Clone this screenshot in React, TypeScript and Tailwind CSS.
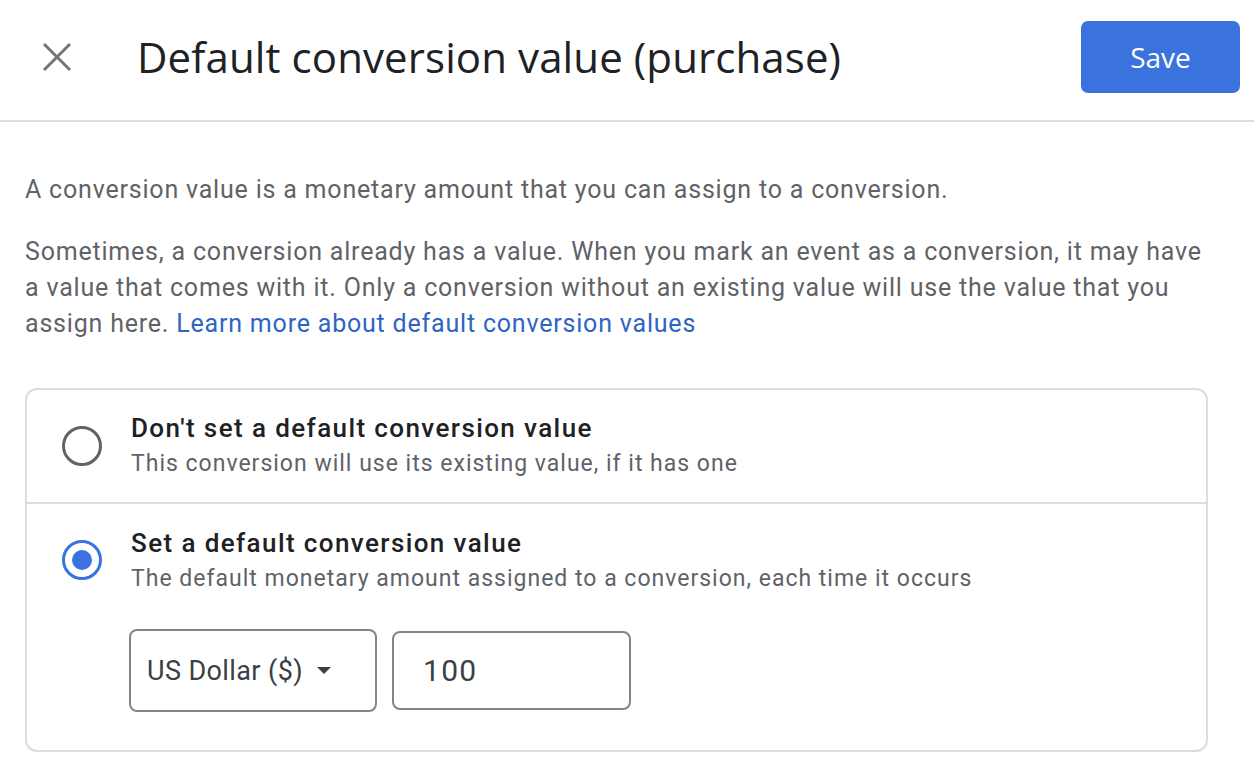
import React, { useState } from "react";

const Radio: React.FC<{ checked: boolean }> = ({ checked }) => (
  <span
    className={`flex h-[40px] w-[40px] shrink-0 items-center justify-center rounded-full border-[3px] ${
      checked ? "border-[#3b73de]" : "border-[#5f6368]"
    }`}
  >
    {checked && <span className="h-[20px] w-[20px] rounded-full bg-[#3b73de]" />}
  </span>
);

const DefaultValueDialog: React.FC = () => {
  const [mode, setMode] = useState<"none" | "set">("set");

  return (
    <div className="min-h-[770px] w-[1254px] bg-white font-['Roboto',sans-serif] text-[#5f6368]">
      <header className="flex h-[122px] items-center border-b-2 border-[#dadce0] pb-[7px] pl-[40px] pr-[14px]">
        <button className="flex h-[34px] w-[34px] items-center justify-center text-[#757575]">
          <svg width="32" height="32" viewBox="0 0 32 32">
            <path d="M3 3 L29 29 M29 3 L3 29" stroke="currentColor" strokeWidth="3" />
          </svg>
        </button>
        <h1 className="ml-[63px] flex-1 font-['Open_Sans',sans-serif] text-[42px] tracking-[0.1px] text-[#202124]">
          Default conversion value (purchase)
        </h1>
        <button className="h-[72px] w-[159px] rounded-[7px] bg-[#3b73de] font-['Open_Sans',sans-serif] text-[28px] font-medium text-white">
          Save
        </button>
      </header>

      <div className="pl-[25px] pt-[50px] text-[25px] leading-[36px] tracking-[0.8px]">
        <div className="w-[1195px]">
          <p>A conversion value is a monetary amount that you can assign to a conversion.</p>
          <p className="mt-[26px]">
            Sometimes, a conversion already has a value. When you mark an event as a conversion, it may have a value
            that comes with it. Only a conversion without an existing value will use the value that you assign here.{" "}
            <a className="text-[#2f64c2]">Learn more about default conversion values</a>
          </p>
        </div>

        <div className="mt-[46px] w-[1183px] rounded-[12px] border-2 border-[#dadce0]">
          <div
            className="flex h-[114px] cursor-pointer items-center border-b-2 border-[#dadce0] pl-[35px]"
            onClick={() => setMode("none")}
          >
            <Radio checked={mode === "none"} />
            <div className="ml-[29px]">
              <div className="text-[26px] font-medium leading-[36px] tracking-[1.4px] text-[#202124]">
                Don't set a default conversion value
              </div>
              <div className="text-[23px] leading-[36px] tracking-[1px]">
                This conversion will use its existing value, if it has one
              </div>
            </div>
          </div>

          <div className="flex cursor-pointer pl-[35px] pt-[21px] pb-[38px]" onClick={() => setMode("set")}>
            <div className="pt-[15px]">
              <Radio checked={mode === "set"} />
            </div>
            <div className="ml-[29px]">
              <div className="text-[26px] font-medium leading-[36px] tracking-[1.4px] text-[#202124]">
                Set a default conversion value
              </div>
              <div className="text-[23px] leading-[36px] tracking-[1px]">
                The default monetary amount assigned to a conversion, each time it occurs
              </div>
              <div className="mt-[32px] ml-[-2px] flex items-center gap-[15px] tracking-normal text-[#3c4043]">
                <div className="flex h-[83px] w-[248px] items-center rounded-[8px] border-2 border-[#80868b] pl-[16px] text-[27px] tracking-[0.4px]">
                  US Dollar ($)
                  <svg className="ml-[14px]" width="14" height="8" viewBox="0 0 14 8">
                    <path d="M0 0 L14 0 L7 7 Z" fill="#3c4043" />
                  </svg>
                </div>
                <div className="flex h-[79px] w-[239px] items-center rounded-[8px] border-2 border-[#80868b] pl-[29px] text-[30px] tracking-[1.3px]">
                  100
                </div>
              </div>
            </div>
          </div>
        </div>
      </div>
    </div>
  );
};

export default function App() {
  return <DefaultValueDialog />;
}
